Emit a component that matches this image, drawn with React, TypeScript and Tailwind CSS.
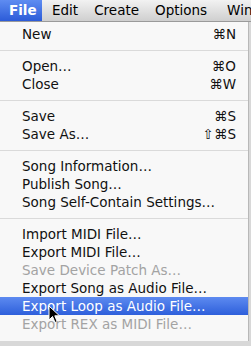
import { Fragment } from "react";

type Item = {
	label: string;
	shortcut?: string;
	disabled?: boolean;
	active?: boolean;
};

const groups: Item[][] = [
	[{ label: "New", shortcut: "⌘N" }],
	[
		{ label: "Open…", shortcut: "⌘O" },
		{ label: "Close", shortcut: "⌘W" },
	],
	[
		{ label: "Save", shortcut: "⌘S" },
		{ label: "Save As…", shortcut: "⇧⌘S" },
	],
	[
		{ label: "Song Information…" },
		{ label: "Publish Song…" },
		{ label: "Song Self-Contain Settings…" },
	],
	[
		{ label: "Import MIDI File…" },
		{ label: "Export MIDI File…" },
		{ label: "Save Device Patch As…", disabled: true },
		{ label: "Export Song as Audio File…" },
		{ label: "Export Loop as Audio File…", active: true },
		{ label: "Export REX as MIDI File…", disabled: true },
	],
];

const menus = ["Edit", "Create", "Options"];

const Cursor = () => (
	<svg
		width="13"
		height="19"
		viewBox="0 0 13 19"
		className="absolute left-[48px] top-[8px]"
	>
		<path
			d="M1 1 L1 15 L4.5 11.5 L7 17.5 L9.2 16.6 L6.8 10.8 L11.5 10.8 Z"
			fill="#000"
			stroke="#fff"
			strokeWidth="1"
			strokeLinejoin="round"
		/>
	</svg>
);

const MenuRow = ({ item }: { item: Item }) => (
	<div
		className={`relative flex h-[18px] items-center justify-between pl-[22px] pr-[12px] ${
			item.active
				? "bg-gradient-to-b from-[#5d8af0] to-[#2e5fdb] text-white"
				: item.disabled
					? "text-[#a3a3a3]"
					: "text-[#111]"
		}`}
	>
		<span>{item.label}</span>
		{item.shortcut && <span>{item.shortcut}</span>}
		{item.active && <Cursor />}
	</div>
);

export default function App() {
	return (
		<div className="h-[346px] w-[251px] overflow-hidden bg-[#d8d8d8] font-['DejaVu_Sans',sans-serif]">
			<div className="flex h-[22px] items-center gap-[16px] whitespace-nowrap border-b border-[#9a9a9a] bg-gradient-to-b from-[#f2f2f2] to-[#cfcfcf] text-[13.5px] text-black">
				<div className="-mr-[6px] flex h-full w-[42px] shrink-0 items-center bg-gradient-to-b from-[#5f8cf1] to-[#2c5bd8] pl-[9px] font-semibold text-white">
					File
				</div>
				{menus.map((m) => (
					<div key={m} className="shrink-0">
						{m}
					</div>
				))}
				<div className="ml-[4px] min-w-0 flex-1 overflow-hidden">Window</div>
			</div>
			<div className="w-[249px] border-r border-[#b8b8b8] bg-[#f8f8f8] pt-[3px] pb-[8px] text-[13.5px] whitespace-nowrap">
				{groups.map((g, i) => (
					<Fragment key={i}>
						{i > 0 && (
							<div className="flex h-[14px] items-center">
								<div className="h-px w-full bg-[#dadada]" />
							</div>
						)}
						{g.map((item) => (
							<MenuRow key={item.label} item={item} />
						))}
					</Fragment>
				))}
			</div>
		</div>
	);
}
